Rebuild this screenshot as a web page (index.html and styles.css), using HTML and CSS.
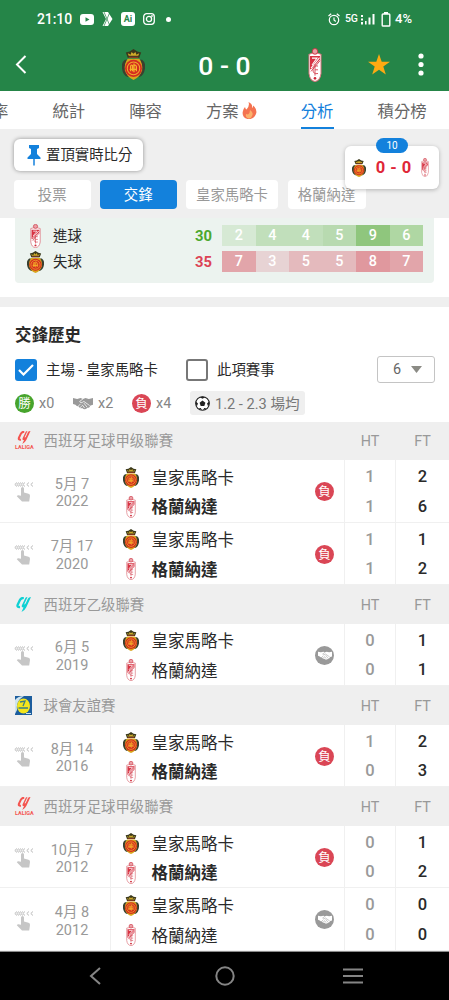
FILE: index.html
```html
<!DOCTYPE html>
<html lang="zh-Hant">

<head>
    <meta charset="UTF-8">
    <meta name="viewport" content="width=device-width, initial-scale=1.0">
    <title>分析</title>
    <link rel="stylesheet" href="styles.css">
</head>

<body>
    <!-- Shared icons -->
    <svg class="sprite">
        <symbol id="mallorca" viewBox="0 0 24 32" preserveAspectRatio="none">
            <path d="M3 11Q-1 14 0 20Q1 27 6 29H18Q23 27 24 20Q25 14 21 11Z" fill="#3a4030"/>
            <path d="M6 10H18Q22 15 21 22Q19 29 12 32Q5 29 3 22Q2 15 6 10Z" fill="#d9a51c"/>
            <path d="M6 9L4 3.500L8 2.500L12 0L16 2.500L20 3.500L18 9Z" fill="#3a381b"/>
            <path d="M7 7L6 4.500L9 6L10 3L12 5L14 3L15 6L18 4.500L17 7Z" fill="#d2ac2a"/>
            <path d="M7 8.500h10" stroke="#a8372a" stroke-width="1"/>
            <circle cx="12" cy="20" r="8.800" fill="#d42c20"/>
            <circle cx="12" cy="20" r="6.500" fill="none" stroke="#f0a92c" stroke-width="1.100"/>
            <path d="M9 23V18Q9 16 11 17V23M12.500 15V24M15 23V18Q14 16 13 17M8 21h7" fill="none" stroke="#f5b22a" stroke-width="1.300"/>
        </symbol>
        <symbol id="granada" viewBox="0 0 14 32" preserveAspectRatio="none">
            <path d="M1 6Q7 3 13 6V24Q12 31 7 31.500Q2 31 1 24Z" fill="#fff" stroke="#dc7780" stroke-width="1"/>
            <circle cx="7" cy="3.200" r="2.700" fill="#eaa0a6" stroke="#cb2837" stroke-width=".8"/>
            <path d="M2 7.500H12V11L3 20H2Z" fill="#d73343"/>
            <path d="M4 9.500H9L4 16M11.500 9L3 19" fill="none" stroke="#fff" stroke-width="1"/>
            <path d="M12 12L3 22M7 15V26M10 17Q5 16 5 20.500Q5 25 10 24M7 20.500H10" fill="none" stroke="#d64a57" stroke-width=".9"/>
            <circle cx="7" cy="28.500" r="1.300" fill="#ce2636"/>
        </symbol>
        <symbol id="laliga" viewBox="0 0 16 15">
            <path d="M8.300 .8Q5.500 .8 4.300 3.300L2.300 7.500Q1 10.300 4.500 10" fill="none" stroke="currentColor" stroke-width="2.300"/>
            <path d="M15.500 0L10.800 10.200Q9.300 13.500 6 15L8 10.500Q5.500 10.500 6.500 8L10 0.800Q10.500 0 12 0L8.700 7.300Q9.600 7.800 10.300 6.300L12.500 1.500Q13.200 0 15.500 0Z" fill="currentColor"/>
        </symbol>
        <symbol id="hands" viewBox="0 0 24 15">
            <path d="M0 1L5 2L9 1L12 2L15 1L19 2L24 1V9L21 10Q20 13 17 13Q14 16 11 13Q8 14 7 11Q4 11 3 9L0 8Z" fill="currentColor"/>
            <path d="M12 2L8 5Q9 8 13 5L20 10M13 7L17 12M11 9L14 13M6 11L9 8M8 13L11 10" fill="none" stroke="var(--line)" stroke-width=".9"/>
        </symbol>
        <symbol id="swipe" viewBox="0 0 20 20">
            <path d="M3 .5L.8 2.500L3 4.500M7 .5L4.800 2.500L7 4.500M11 .5L8.800 2.500L11 4.500M15 .5L12.800 2.500L15 4.500M19 .5L16.800 2.500L19 4.500M5 .5L2.800 2.500L5 4.500M9 .5L6.800 2.500L9 4.500" fill="none" stroke="#b4b4b4" stroke-width=".9"/>
            <path d="M7 6.500Q7 5 8.500 5T10 6.500V10.500L14.500 11.700Q16.200 12.200 16 14L15.200 19.500H8L2.800 14.200Q3.500 12.300 7 13.800Z" fill="#c6c6c6"/>
        </symbol>
    </svg>

    <div class="status">
        <span class="clock">21:10</span>
        <svg class="yt" width="14" height="11" viewBox="0 0 14 11"><rect width="14" height="11" rx="3" fill="#fff"/><path d="M5.500 3.200V7.800L9.500 5.500Z" fill="#258548"/></svg>
        <svg class="xi" width="11" height="14" viewBox="0 0 11 14"><path d="M.5 0H6L10.500 7L6 14H.5L4 7Z" fill="#fff"/><path d="M2 0L8 14M8 0L2 14" stroke="#258548" stroke-width=".7"/></svg>
        <span class="ai">Ai</span>
        <svg class="ig" width="12" height="12" viewBox="0 0 12 12" fill="none" stroke="#fff" stroke-width="1.300"><rect x=".7" y=".7" width="10.600" height="10.600" rx="3"/><circle cx="6" cy="6" r="2.600"/><circle cx="9" cy="3" r=".3"/></svg>
        <i class="dot"></i>
        <span class="status-right">
            <svg width="12" height="13" viewBox="0 0 12 13" fill="none" stroke="#fff" stroke-width="1.200"><circle cx="6" cy="7" r="4.700"/><path d="M.5 3L3.200 .8M11.500 3L8.800 .8M6 4.500V7L7.800 8.500"/></svg>
            <span class="net">5G</span>
            <svg class="signal" width="14" height="12" viewBox="0 0 14 12" fill="#fff"><path d="M0 2h2v2H0zM0 5.500h2v2H0zM0 9h2v2.500H0zM4 8h1.600v3.500H4zM7.500 4.500h2v7h-2zM11.500 1h2v10.500h-2z"/></svg>
            <svg class="battery" width="10" height="15" viewBox="0 0 10 15"><path d="M3 0h4v2H3z" fill="#fff"/><rect x="1.200" y="2" width="7.600" height="12" rx=".8" fill="none" stroke="#fff" stroke-width="1.400"/></svg>
            <span class="percent">4%</span>
        </span>
    </div>

    <div class="toolbar">
        <svg class="back" width="12" height="19" viewBox="0 0 12 19"><path d="M10.500 1L2 9.500L10.500 18" fill="none" stroke="#fff" stroke-width="2"/></svg>
        <svg class="home" width="23" height="31"><use href="#mallorca"/></svg>
        <span class="score">0 - 0</span>
        <svg class="away" width="14" height="34"><use href="#granada"/></svg>
        <svg class="star" width="22" height="21" viewBox="0 0 22 21"><path d="M11 0L13.700 7.700H22L15.300 12.600L17.800 20.500L11 15.700L4.200 20.500L6.700 12.600L0 7.700H8.300Z" fill="#fdaa12"/></svg>
        <svg class="more" width="6" height="23" viewBox="0 0 6 23" fill="#fff"><circle cx="3" cy="3" r="2.600"/><circle cx="3" cy="11.500" r="2.600"/><circle cx="3" cy="20" r="2.600"/></svg>
    </div>

    <div class="tabs">
        <span>率</span>
        <span>統計</span>
        <span>陣容</span>
        <span class="hot">方案<svg width="15" height="17" viewBox="0 0 15 17"><path d="M6.500 0Q11 2 10 6Q11 5.500 11.300 3.500Q15 7 14.300 11Q13 16 8.500 17H5.500Q0 15.500 .7 10Q1 7 3 5Q3.500 7 4.500 7.500Q8 4 6.500 0Z" fill="#f47350"/><path d="M8 8Q12 11 10 14Q9 17 6.500 16.500Q3 15 4 12L6 12.500Q8 11 8 8Z" fill="#fbb16b"/></svg></span>
        <span class="active">分析</span>
        <span>積分榜</span>
    </div>

    <div class="filters">
        <div class="pin">
            <svg width="14" height="21" viewBox="0 0 14 21"><path d="M2 0H12V3L10 4V9L13.500 12.500V14H.5V12.500L4 9V4L2 3Z" fill="#1381dc"/><path d="M7 13V20.500" stroke="#1381dc" stroke-width="1.500"/></svg>
            置頂實時比分
        </div>
        <div class="pills">
            <span class="pill">投票</span>
            <span class="pill on">交鋒</span>
            <span class="pill wide">皇家馬略卡</span>
            <span class="pill mid">格蘭納達</span>
        </div>
        <div class="floating">
            <span class="minute">10</span>
            <svg width="14" height="18"><use href="#mallorca"/></svg>
            <b>0 - 0</b>
            <svg width="8" height="19"><use href="#granada"/></svg>
        </div>
    </div>

    <div class="goals">
        <div class="goal-row">
            <svg class="goal-crest" width="11" height="24"><use href="#granada"/></svg>
            <span class="goal-name">進球</span>
            <b class="green">30</b>
            <div class="cells">
                <span class="g1">2</span><span class="g2">4</span><span class="g2">4</span><span class="g3">5</span><span class="g5">9</span><span class="g4">6</span>
            </div>
        </div>
        <div class="goal-row">
            <svg class="goal-crest" width="17" height="22"><use href="#mallorca"/></svg>
            <span class="goal-name">失球</span>
            <b class="red">35</b>
            <div class="cells">
                <span class="r3">7</span><span class="r1">3</span><span class="r2">5</span><span class="r2">5</span><span class="r4">8</span><span class="r3">7</span>
            </div>
        </div>
    </div>

    <div class="history">
        <h3>交鋒歷史</h3>
        <div class="options">
            <span class="check checked"><svg width="16" height="12" viewBox="0 0 16 12"><path d="M1 6L5.500 10.500L15 1" fill="none" stroke="#fff" stroke-width="2.200"/></svg></span>
            <span class="label label-home">主場 - 皇家馬略卡</span>
            <span class="check"></span>
            <span class="label">此項賽事</span>
            <span class="select">6<svg width="11" height="7" viewBox="0 0 11 7"><path d="M0 0H11L5.500 7Z" fill="#8b8b85"/></svg></span>
        </div>
        <div class="legend">
            <span class="badge win">勝</span><span class="count">x0</span>
            <svg class="hands" width="20" height="13"><use href="#hands"/></svg><span class="count">x2</span>
            <span class="badge">負</span><span class="count">x4</span>
            <span class="average">
                <svg width="15" height="15" viewBox="0 0 15 15"><circle cx="7.500" cy="7.500" r="6.800" fill="#fff" stroke="#222" stroke-width="1.100"/><path d="M7.500 4.600L10.400 6.700L9.300 10H5.700L4.600 6.700ZM4.700 1.300L7.500 2.800L10.300 1.300L7.500 .4ZM.9 5.500L3 7.500L1.800 10.500L.6 7.500ZM14.100 5.500L12 7.500L13.200 10.500L14.400 7.500ZM3.500 12.300L5.800 12L7 14.300ZM11.500 12.300L9.200 12L8 14.300Z" fill="#222"/></svg>
                1.2 - 2.3 場均
            </span>
        </div>
    </div>

    <div class="league">
        <span class="logo laliga"><svg width="14" height="13"><use href="#laliga"/></svg><small>LALIGA</small></span>
        <span class="league-name">西班牙足球甲级聯賽</span><span class="ht">HT</span><span class="ft">FT</span>
    </div>
    <div class="match">
        <div class="when"><svg width="20" height="20"><use href="#swipe"/></svg><span>5月 7<br>2022</span></div>
        <div class="teams">
            <p><svg class="crest" width="16" height="21"><use href="#mallorca"/></svg>皇家馬略卡</p>
            <p class="winner"><svg class="crest narrow" width="10" height="22"><use href="#granada"/></svg>格蘭納達</p>
        </div>
        <div class="outcome"><span class="badge">負</span></div>
        <div class="ht"><p>1</p><p>1</p></div>
        <div class="ft"><p>2</p><p>6</p></div>
    </div>
    <div class="match">
        <div class="when"><svg width="20" height="20"><use href="#swipe"/></svg><span>7月 17<br>2020</span></div>
        <div class="teams">
            <p><svg class="crest" width="16" height="21"><use href="#mallorca"/></svg>皇家馬略卡</p>
            <p class="winner"><svg class="crest narrow" width="10" height="22"><use href="#granada"/></svg>格蘭納達</p>
        </div>
        <div class="outcome"><span class="badge">負</span></div>
        <div class="ht"><p>1</p><p>1</p></div>
        <div class="ft"><p>1</p><p>2</p></div>
    </div>

    <div class="league">
        <span class="logo segunda"><svg width="17" height="15"><use href="#laliga"/></svg></span>
        <span class="league-name">西班牙乙级聯賽</span><span class="ht">HT</span><span class="ft">FT</span>
    </div>
    <div class="match">
        <div class="when"><svg width="20" height="20"><use href="#swipe"/></svg><span>6月 5<br>2019</span></div>
        <div class="teams">
            <p><svg class="crest" width="16" height="21"><use href="#mallorca"/></svg>皇家馬略卡</p>
            <p><svg class="crest narrow" width="10" height="22"><use href="#granada"/></svg>格蘭納達</p>
        </div>
        <div class="outcome"><span class="badge draw"><svg width="14" height="9"><use href="#hands"/></svg></span></div>
        <div class="ht"><p>0</p><p>0</p></div>
        <div class="ft"><p>1</p><p>1</p></div>
    </div>

    <div class="league">
        <span class="logo"><svg width="17" height="19" viewBox="0 0 17 19"><rect width="17" height="19" fill="#1c5d9d"/><path d="M0 4Q3 0 9 0L5 3Q1 8 2 14L0 18Z" fill="#cfe4ee"/><ellipse cx="8.500" cy="10" rx="6.500" ry="7.500" fill="#f3e51c"/><path d="M5 6L10 5L8 10M3.500 12H13" fill="none" stroke="#3b7e83" stroke-width="1.300"/><path d="M11 17.500h5" stroke="#cfe4ee"/></svg></span>
        <span class="league-name">球會友誼賽</span><span class="ht">HT</span><span class="ft">FT</span>
    </div>
    <div class="match">
        <div class="when"><svg width="20" height="20"><use href="#swipe"/></svg><span>8月 14<br>2016</span></div>
        <div class="teams">
            <p><svg class="crest" width="16" height="21"><use href="#mallorca"/></svg>皇家馬略卡</p>
            <p class="winner"><svg class="crest narrow" width="10" height="22"><use href="#granada"/></svg>格蘭納達</p>
        </div>
        <div class="outcome"><span class="badge">負</span></div>
        <div class="ht"><p>1</p><p>0</p></div>
        <div class="ft"><p>2</p><p>3</p></div>
    </div>

    <div class="league">
        <span class="logo laliga"><svg width="14" height="13"><use href="#laliga"/></svg><small>LALIGA</small></span>
        <span class="league-name">西班牙足球甲级聯賽</span><span class="ht">HT</span><span class="ft">FT</span>
    </div>
    <div class="match">
        <div class="when"><svg width="20" height="20"><use href="#swipe"/></svg><span>10月 7<br>2012</span></div>
        <div class="teams">
            <p><svg class="crest" width="16" height="21"><use href="#mallorca"/></svg>皇家馬略卡</p>
            <p class="winner"><svg class="crest narrow" width="10" height="22"><use href="#granada"/></svg>格蘭納達</p>
        </div>
        <div class="outcome"><span class="badge">負</span></div>
        <div class="ht"><p>0</p><p>0</p></div>
        <div class="ft"><p>1</p><p>2</p></div>
    </div>
    <div class="match">
        <div class="when"><svg width="20" height="20"><use href="#swipe"/></svg><span>4月 8<br>2012</span></div>
        <div class="teams">
            <p><svg class="crest" width="16" height="21"><use href="#mallorca"/></svg>皇家馬略卡</p>
            <p><svg class="crest narrow" width="10" height="22"><use href="#granada"/></svg>格蘭納達</p>
        </div>
        <div class="outcome"><span class="badge draw"><svg width="14" height="9"><use href="#hands"/></svg></span></div>
        <div class="ht"><p>0</p><p>0</p></div>
        <div class="ft"><p>0</p><p>0</p></div>
    </div>

    <div class="navbar">
        <svg width="12" height="18" viewBox="0 0 12 18"><path d="M11 1L2 9L11 17" fill="none" stroke="#858585" stroke-width="2"/></svg>
        <svg class="circle" width="20" height="20" viewBox="0 0 20 20"><circle cx="10" cy="10" r="8.700" fill="none" stroke="#858585" stroke-width="2"/></svg>
        <svg width="20" height="16" viewBox="0 0 20 16"><path d="M0 1.500h20M0 8h20M0 14.500h20" stroke="#858585" stroke-width="2.200"/></svg>
    </div>
</body>

</html>
```

FILE: styles.css
```css
* {
    box-sizing: border-box;
}

body {
    margin: 0;
    width: 449px;
    height: 1000px;
    overflow: hidden;
    display: flex;
    flex-direction: column;
    background-color: #fff;
    color: #2a2a2a;
    font-family: Roboto, "Noto Sans CJK TC", sans-serif;
    font-size: 14.4px;
    line-height: 18px;
}

body > * {
    flex-shrink: 0;
}

svg {
    display: block;
    flex-shrink: 0;
}

p, h3 {
    margin: 0;
}

.sprite {
    position: absolute;
    width: 0;
    height: 0;
}

/* Status bar */
.status {
    height: 38px;
    padding: 0 37px;
    display: flex;
    align-items: center;
    background-color: #258548;
    color: #fff;
    font-weight: 500;
}

.clock {
    width: 43px;
    font-size: 14px;
    letter-spacing: -0.1px;
}

.yt {
    margin-right: 8px;
}

.xi {
    margin-right: 8px;
}

.ai {
    width: 14px;
    height: 14px;
    margin-right: 8px;
    border-radius: 3px;
    background-color: #fff;
    color: #258548;
    font-size: 9px;
    font-weight: 700;
    line-height: 14px;
    text-align: center;
}

.dot {
    width: 5px;
    height: 5px;
    margin-left: 11px;
    border-radius: 50%;
    background-color: #fff;
}

.status-right {
    margin-left: auto;
    display: flex;
    align-items: center;
    font-size: 13px;
}

.net {
    margin: 0 3px 0 5px;
    font-size: 10.5px;
    font-weight: 500;
}

.battery {
    margin: 0 4px 0 6px;
}

/* Score bar */
.toolbar {
    height: 53px;
    padding: 0 25px 0 15px;
    display: flex;
    align-items: center;
    background-color: #258548;
    color: #fff;
}

.home {
    margin-left: 95px;
}

.score {
    width: 100px;
    margin: 2px 0 0 29.500px;
    font-size: 26.5px;
    font-weight: 500;
    text-align: center;
}

.away {
    margin-left: 33px;
}

.star {
    margin-left: 46px;
}

.more {
    margin-left: auto;
}

.tabs {
    height: 38px;
    margin-left: -8px;
    display: flex;
    gap: 44px;
    color: #666;
    font-size: 16.4px;
    line-height: 41px;
    white-space: nowrap;
}

.hot {
    display: flex;
    gap: 3px;
}

.hot svg {
    margin-top: 11px;
}

.active {
    position: relative;
    color: #1381dc;
}

.active::after {
    content: "";
    position: absolute;
    left: 0;
    right: 0;
    bottom: -1px;
    height: 3px;
    background-color: #1381dc;
}

/* Filters */
.filters {
    position: relative;
    height: 89px;
    padding: 10px 0 0 14px;
    background-color: #efefef;
}

.pin {
    width: 129px;
    height: 32px;
    padding: 2px 0 0 13px;
    display: flex;
    align-items: center;
    gap: 5px;
    border-radius: 6px;
    background-color: #fff;
    box-shadow: 0 0 4px rgba(0, 0, 0, 0.4);
}

.pin svg {
    margin-bottom: 2px;
}

.pills {
    margin-top: 9px;
    display: flex;
    gap: 9.5px;
}

.pill {
    width: 76.5px;
    height: 29px;
    border-radius: 4px;
    background-color: #fff;
    color: #999;
    line-height: 31px;
    text-align: center;
}

.pill.on {
    background-color: #1381dc;
    color: #fff;
}

.pill.wide {
    width: 92px;
}

.pill.mid {
    width: 78px;
}

.floating {
    position: absolute;
    top: 17px;
    right: 10px;
    width: 94px;
    height: 43px;
    padding: 0 10px 0 7px;
    display: flex;
    align-items: center;
    justify-content: space-between;
    border-radius: 6px;
    background-color: #fff;
    color: #df2638;
    font-size: 16.5px;
    word-spacing: 1px;
    box-shadow: 0 1px 4px rgba(0, 0, 0, 0.25);
}

.minute {
    position: absolute;
    top: -8px;
    left: 31px;
    width: 32px;
    height: 15px;
    border-radius: 8px;
    background-color: #1381dc;
    color: #fff;
    font-size: 10px;
    line-height: 15px;
    text-align: center;
}

/* Goals by period */
.goals {
    height: 65px;
    margin: 0 15px;
    padding: 7px 11px 0 12px;
    display: flex;
    flex-direction: column;
    gap: 5px;
    border-radius: 0 0 4px 4px;
    background-color: #ecf3ef;
}

.goal-row {
    height: 21px;
    display: flex;
    align-items: center;
}

.goal-crest + .goal-name {
    margin-left: 9px;
}

.goal-crest[width="11"] {
    margin: 0 3px;
}

.goal-name {
    width: 142px;
    padding-top: 2px;
}

.goal-row b {
    width: 27px;
    font-size: 14.8px;
}

.green {
    color: #4ba82e;
}

.red {
    color: #dc4355;
}

.cells {
    flex: 1;
    display: flex;
    color: #fff;
    font-weight: 500;
    line-height: 22px;
    text-align: center;
}

.cells span {
    flex: 1;
    height: 21px;
}

.g1 { background-color: #d6e9d4; }
.g2 { background-color: #c1dfbb; }
.g3 { background-color: #b8dab0; }
.g4 { background-color: #afd7a3; }
.g5 { background-color: #8fc67d; }
.r1 { background-color: #e7d3d4; }
.r2 { background-color: #e4babd; }
.r3 { background-color: #e2a5aa; }
.r4 { background-color: #e0989e; }

/* History */
.history {
    height: 124.500px;
    margin-top: 14px;
    padding: 19px 14px 0 15px;
    border-top: 10px solid #efefef;
}

.history h3 {
    font-size: 16.5px;
    line-height: 20px;
}

.options {
    height: 27px;
    margin-top: 10px;
    display: flex;
    align-items: center;
}

.check {
    width: 22px;
    height: 22px;
    margin-right: 9px;
    border: 2px solid #777;
    border-radius: 3px;
}

.checked {
    display: flex;
    align-items: center;
    justify-content: center;
    border-color: #1381dc;
    background-color: #1381dc;
}

.label {
    padding-top: 2px;
}

.label-home {
    width: 140px;
}

.select {
    width: 58px;
    height: 27px;
    margin-left: auto;
    padding: 0 12px 0 15px;
    display: flex;
    align-items: center;
    justify-content: space-between;
    border: 1px solid #c4c4c4;
    border-radius: 3px;
    color: #666;
}

.legend {
    margin-top: 8px;
    display: flex;
    align-items: center;
    color: #858585;
}

.badge {
    width: 19px;
    height: 19px;
    display: flex;
    align-items: center;
    justify-content: center;
    border-radius: 50%;
    background-color: #da4655;
    color: #fff;
    font-size: 12.5px;
    line-height: 19px;
}

.win {
    background-color: #47a42c;
}

.draw {
    --line: #999;
    background-color: #999;
}

.hands {
    --line: #fff;
    color: #999;
}

.count {
    width: 39px;
    padding: 1px 0 0 5px;
}

.average {
    height: 24px;
    padding: 2px 5px 0 5px;
    display: flex;
    align-items: center;
    gap: 5px;
    border-radius: 3px;
    background-color: #efefef;
    color: #777;
    font-size: 14.6px;
    white-space: nowrap;
}

.average svg {
    margin-bottom: 2px;
}

/* Results */
.league {
    height: 38.5px;
    padding: 3px 0 0 15px;
    display: flex;
    align-items: center;
    background-color: #efefef;
    color: #999;
}

.logo {
    width: 28.500px;
    margin-top: -3px;
    display: flex;
    flex-direction: column;
}

.laliga {
    color: #f4544f;
}

.laliga svg {
    margin-left: 2px;
}

.laliga small {
    font-size: 5.5px;
    font-weight: 700;
    line-height: 7px;
}

.segunda {
    color: #0fd0d3;
}

.league-name {
    flex: 1;
}

.ht {
    width: 52px;
    text-align: center;
}

.ft {
    width: 53px;
    text-align: center;
}

.match {
    height: 62.6px;
    display: flex;
    border-bottom: 1px solid #f0f0f0;
    font-size: 16.5px;
}

.when {
    width: 111px;
    padding: 3px 0 0 14px;
    display: flex;
    align-items: center;
    border-right: 1px solid #f0f0f0;
    color: #999;
    font-size: 14.5px;
    line-height: 17.5px;
    text-align: center;
}

.when span {
    flex: 1;
    padding-top: 2px;
}

.teams {
    flex: 1;
    padding: 4px 0 0 12px;
}

.teams p {
    height: 29.5px;
    display: flex;
    align-items: center;
}

.crest {
    margin: 0 12.5px 3px 0;
}

.crest.narrow {
    margin: 0 15.5px 3px 3px;
}

.winner {
    font-weight: 700;
}

.outcome {
    width: 29px;
    padding-top: 22px;
}

.match .ht,
.match .ft {
    padding-top: 2px;
    font-weight: 500;
    line-height: 29.5px;
}

.match .ht {
    border-left: 1px solid #f0f0f0;
    border-right: 1px solid #f0f0f0;
    color: #999;
}

.navbar {
    flex: 1;
    padding: 0 86px 0 89px;
    display: flex;
    align-items: center;
    justify-content: space-between;
    border-top: 1px solid #8a8a8a;
    background-color: #000;
}

.circle {
    margin-left: 5px;
}
```
